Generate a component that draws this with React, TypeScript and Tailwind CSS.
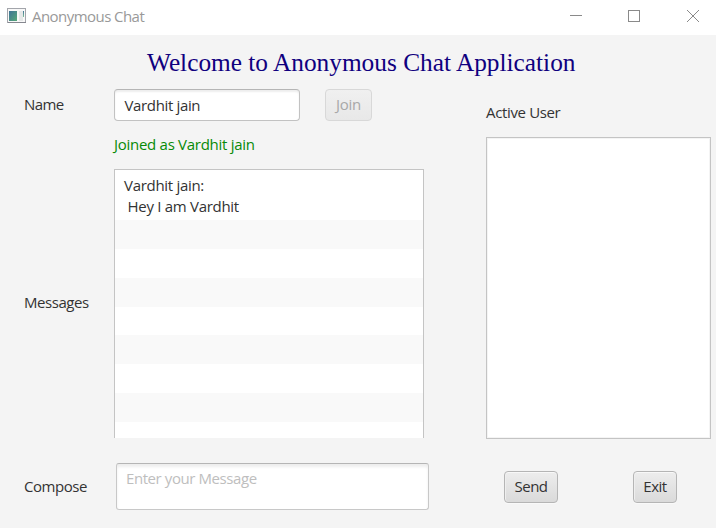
import React from 'react';

const stripes = [
  'h-[29px] bg-[#f9f9f9]',
  'h-[29px] bg-white',
  'h-[29px] bg-[#f9f9f9]',
  'h-[28px] bg-white',
  'h-[29px] bg-[#f9f9f9]',
  'h-[29px] bg-white',
  'h-[29px] bg-[#f9f9f9]',
  'h-[16px] bg-white',
];

function TitleBar() {
  return (
    <header className="flex h-[35px] items-start bg-white">
      <svg className="mt-2 ml-[7px] shrink-0" width="19" height="16" viewBox="0 0 19 16" shapeRendering="crispEdges">
        <defs>
          <linearGradient id="pane" x1="0" y1="0" x2="1" y2="1">
            <stop offset="0" stopColor="#3f7397" />
            <stop offset="1" stopColor="#56a878" />
          </linearGradient>
          <linearGradient id="strip" x1="0" y1="0" x2="0" y2="1">
            <stop offset="0" stopColor="#3f7397" />
            <stop offset="1" stopColor="#7fc09a" />
          </linearGradient>
        </defs>
        <rect x="0.5" y="0.5" width="18" height="14" fill="#f8f8f8" stroke="#a3a5ab" />
        <rect x="1" y="14" width="18" height="1" fill="#85878f" />
        <rect x="2" y="3" width="8" height="10" fill="url(#pane)" />
        <rect x="12" y="3" width="4" height="10" fill="#e6e8e8" />
        <rect x="16" y="3" width="1" height="6" fill="url(#strip)" />
      </svg>
      <span className="mt-[6px] ml-[6px] grow text-[15px] leading-5 tracking-[-0.55px] text-[#999]">Anonymous Chat</span>
      <svg className="shrink-0" width="158" height="35" viewBox="0 0 158 35" fill="none" stroke="#8a8a8a">
        <path d="M12 15.5h12" />
        <rect x="70.5" y="10.5" width="11" height="11" />
        <path d="M129 10l12 12M141 10l-12 12" />
      </svg>
    </header>
  );
}

export default function App() {
  return (
    <div className="h-[528px] w-[716px] overflow-hidden bg-[#f4f4f4] font-['Open_Sans','Noto_Sans',sans-serif] text-[15px] leading-5 text-[#333] whitespace-nowrap">
      <TitleBar />
      <h1 className="ml-[147px] h-[54px] pt-[12px] font-['Liberation_Serif',serif] text-[25.33px] leading-[30px] text-[#10007f]">
        Welcome to Anonymous Chat Application
      </h1>
      <main className="flex">
        <section className="ml-6 w-[462px]">
          <div className="flex h-8 items-center">
            <label className="w-[90px] pb-[2px] tracking-[-0.6px]">Name</label>
            <div className="flex h-8 w-[186px] items-center rounded-[4px] border border-[#c2c2c2] border-t-[#b5b5b5] bg-white pb-px pl-[9.5px] tracking-[-0.35px] shadow-[inset_0_2px_2px_#eeeeee]">
              Vardhit jain
            </div>
            <button className="ml-[25px] h-8 w-[47px] rounded-[4px] border border-[#d8d8d8] bg-linear-to-b from-[#f0f0f0] to-[#e8e8e8] pb-[2px] tracking-[-0.25px] text-[#a8a8a8]" disabled>
              Join
            </button>
          </div>
          <p className="mt-[13px] ml-[90px] tracking-[-0.28px] text-[#078a07]">Joined as Vardhit jain</p>
          <div className="mt-[15px] flex h-[269px]">
            <div className="w-[90px] pt-[123px] tracking-[-0.45px]">Messages</div>
            <div className="w-[310px] overflow-hidden border border-b-0 border-[#c4c4c4] bg-white">
              <div className="h-[50px] pt-[5px] pl-[9px] leading-[21px] tracking-[-0.3px] whitespace-pre">
                <div>Vardhit jain:</div>
                <div> Hey I am Vardhit</div>
              </div>
              {stripes.map((s, i) => (
                <div key={i} className={s} />
              ))}
            </div>
          </div>
          <div className="mt-[25px] flex h-[47px]">
            <label className="w-[92px] pt-[13px] tracking-[-0.45px]">Compose</label>
            <div className="w-[313px] rounded-[3px] border border-[#c8c8c8] border-t-[#b5b5b5] bg-white pt-[4px] pl-[9px] tracking-[-0.42px] text-[#bebebe] shadow-[inset_0_3px_3px_#eeeeee]">
              Enter your Message
            </div>
          </div>
        </section>
        <aside className="w-[225px]">
          <h2 className="mt-[13px] tracking-[-0.35px]">Active User</h2>
          <div className="mt-[15px] h-[302px] border border-[#c4c4c4] bg-white shadow-[inset_0_0_0_1px_#f4f4f4]" />
          <div className="mt-8 flex">
            <button className="ml-[18px] h-8 w-[54px] rounded-[4px] border border-[#b5b5b5] bg-linear-to-b from-[#ededed] to-[#dadada] pb-[2px] tracking-[-0.5px] shadow-[inset_0_1px_0_#f8f8f8,inset_1px_0_0_#eeeeee,0_1px_0_#f9f9f9]">
              Send
            </button>
            <button className="ml-[75px] h-8 w-[44px] rounded-[4px] border border-[#b5b5b5] bg-linear-to-b from-[#ededed] to-[#dadada] pb-[2px] tracking-[-0.5px] shadow-[inset_0_1px_0_#f8f8f8,inset_1px_0_0_#eeeeee,0_1px_0_#f9f9f9]">
              Exit
            </button>
          </div>
        </aside>
      </main>
    </div>
  );
}
